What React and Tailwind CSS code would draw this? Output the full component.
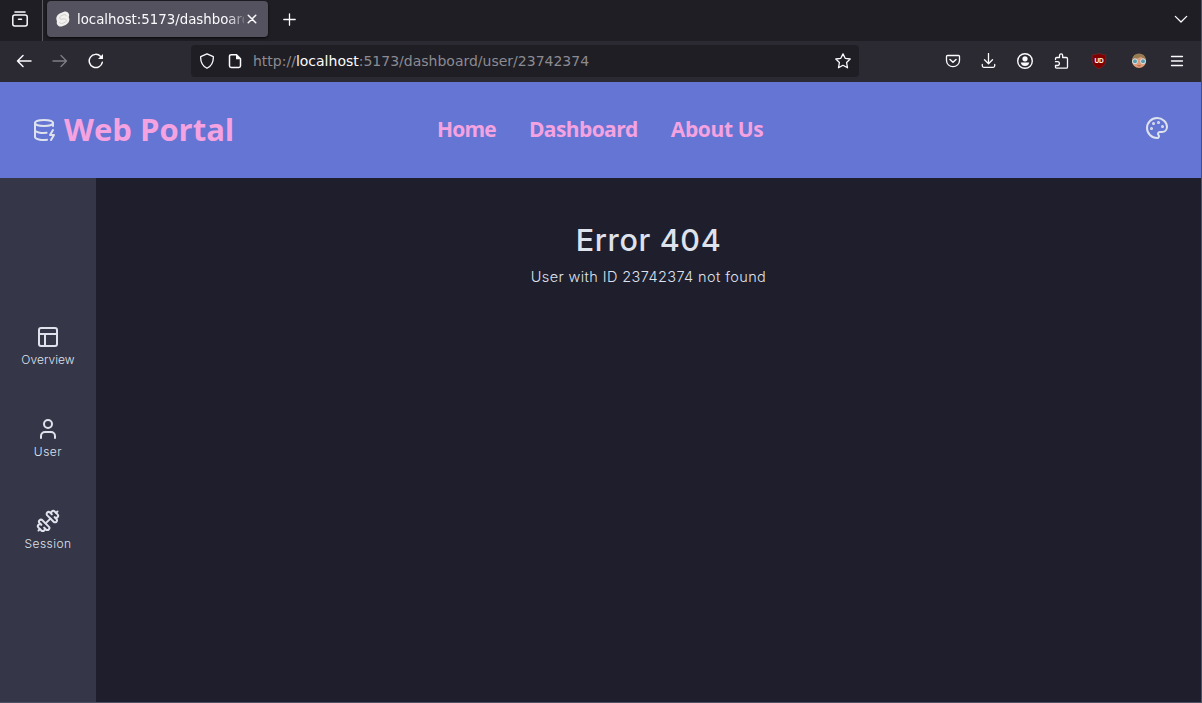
import React from "react";
import { DatabaseZap, Palette, PanelsTopLeft, User, Dumbbell } from "lucide-react";

function Svg({ size = 16, className = "", children }) {
  return (
    <svg
      width={size}
      height={size}
      viewBox="0 0 16 16"
      fill="none"
      stroke="currentColor"
      strokeWidth="1.3"
      strokeLinecap="round"
      strokeLinejoin="round"
      className={"shrink-0 " + className}
    >
      {children}
    </svg>
  );
}

function TabBar() {
  return (
    <div className="flex h-[41px] items-start bg-[#1f1e24] text-[#fbfbfe]">
      <div className="flex h-[41px] w-[43px] items-center border-r border-[#5b5a63] pl-3 pb-[3px]">
        <Svg>
          <path d="M3 1H13" strokeWidth="1.5" />
          <rect x="0.8" y="4" width="14.4" height="11" rx="2" strokeWidth="1.5" />
          <path d="M6.500 8.200H9.500" strokeWidth="1.5" />
        </Svg>
      </div>
      <div className="ml-1 mt-px flex h-9 w-[221px] items-center rounded bg-[#53525e] pl-2 shadow-sm shadow-black/60">
        <svg width="16" height="16" viewBox="0 0 16 16" className="shrink-0">
          <path d="M5.200 2.200 9 .7C11-.1 13.200.9 13.900 2.900 14.300 4 14.200 5 13.700 6 14.500 7.500 14.500 9 13.900 10.600 13.200 12.300 12 13.200 10.600 13.900L7.300 15.300C5.200 16.100 3 15.200 2.100 13.300 1.600 12.200 1.600 11.200 2 10.200 1.300 9 1.100 7.500 1.600 6 2.200 4 3.500 3 5.200 2.200Z" fill="#f1f0ee" />
          <path d="M11.500 5.200C11 3.600 9.600 3.200 8.300 3.800L5.700 5.100C4 6 4.300 8.100 6 8.200L9.400 7.900C11.600 7.900 12 10.200 10.300 11.100L7.500 12.400C6.100 13 4.700 12.400 4.400 11" fill="none" stroke="#cfcecc" strokeWidth="1" />
        </svg>
        <div className="ml-[5px] mt-px w-[168px] overflow-hidden whitespace-nowrap pl-px font-['DejaVu_Sans',sans-serif] text-[13.33px] leading-5 [mask-image:linear-gradient(to_right,black_152px,transparent_172px)]">
          localhost:5173/dashboard
        </div>
        <Svg size={10} className="ml-[3px]">
          <path d="M2 2 14 14M14 2 2 14" strokeWidth="2.400" />
        </Svg>
      </div>
      <div className="ml-[15px] mt-[13px]">
        <Svg size={13}>
          <path d="M8 1V15M1 8H15" strokeWidth="1.600" />
        </Svg>
      </div>
      <div className="ml-auto mr-[13px] mt-[12px]">
        <Svg size={14}>
          <path d="M1.500 5 8 11.500 14.500 5" strokeWidth="1.500" />
        </Svg>
      </div>
    </div>
  );
}

function ToolBar() {
  return (
    <div className="flex h-[41px] items-center bg-[#2b2a33] pb-[2px] pl-4 pr-4 text-[#fbfbfe]">
      <Svg>
        <path d="M15 8H1.500M7 2.500 1.500 8 7 13.500" strokeWidth="1.500" />
      </Svg>
      <Svg className="ml-5 text-[#7f7e86]">
        <path d="M1 8H14.500M9 2.500 14.500 8 9 13.500" />
      </Svg>
      <Svg className="ml-5">
        <path d="M14.300 9.300A6.600 6.600 0 1 1 12.700 3.500" strokeWidth="1.500" />
        <path d="M15 1V6H10Z" fill="currentColor" stroke="none" />
      </Svg>
      <div className="ml-[87px] flex h-8 w-[668px] items-center rounded bg-[#1f1e24] pl-2 pr-2">
        <Svg>
          <path d="M8 .8 14.300 3.600C14.600 8.500 13 12.600 8 15.300 3 12.600 1.400 8.500 1.700 3.600Z" />
        </Svg>
        <Svg className="ml-3">
          <path d="M4.200 1.700H9.500L13.500 5.700V12.800Q13.500 14.500 11.800 14.500H4.200Q2.500 14.500 2.500 12.800V3.400Q2.500 1.700 4.200 1.700Z" strokeWidth="1.500" />
          <path d="M9 1.200V6.200H14Z" fill="currentColor" stroke="none" />
        </Svg>
        <div className="ml-[10px] whitespace-nowrap font-['DejaVu_Sans',sans-serif] text-[14px] leading-5 text-[#8c8b92]">
          http://<span className="text-[#fbfbfe]">localhost</span>:5173/dashboard/user/23742374
        </div>
        <Svg className="ml-auto">
          <path d="M8 .9 10.200 5.300 15.200 6 11.600 9.500 12.500 14.800 8 12.300 3.500 14.800 4.400 9.500 .8 6 5.800 5.300Z" />
        </Svg>
      </div>
      <div className="ml-auto flex items-center">
        <Svg>
          <path d="M2.500 2.500H13.500Q14.500 2.500 14.500 3.500V7.500A6.500 6.200 0 0 1 1.500 7.500V3.500Q1.500 2.500 2.500 2.500Z" />
          <path d="M5 6.500 8 9.300 11 6.500" strokeWidth="1.500" />
        </Svg>
        <Svg className="ml-5">
          <path d="M7.500 .5V10.500M3.500 6.800 7.500 10.700 11.500 6.800M1.300 11.500V12.800Q1.300 14.300 2.800 14.300H12.200Q13.700 14.300 13.700 12.800V11.500" />
        </Svg>
        <Svg className="ml-5">
          <circle cx="8" cy="8" r="7.300" strokeWidth="1.400" />
          <circle cx="8" cy="5.800" r="2.600" fill="currentColor" stroke="none" />
          <path d="M3.700 9.400H12.300Q11.500 12.900 8 12.900T3.700 9.400Z" fill="currentColor" stroke="none" />
        </Svg>
        <Svg className="ml-[21px]">
          <path d="M1.500 6.500V5.700Q1.500 4.500 2.700 4.500H5.500V2.700A1.600 1.800 0 0 1 8.700 2.700V4.500H12.300Q13.500 4.500 13.500 5.700V14Q13.500 15.200 12.300 15.200H2.700Q1.500 15.200 1.500 14V12.500H3.500A1.900 1.900 0 0 0 3.500 8.700H1.500" />
        </Svg>
        <div className="relative ml-[21px] h-4 w-4">
          <svg width="16" height="16" viewBox="0 0 16 16">
            <path d="M8 .3Q11 1.800 14.800 1.800V7.500Q14.500 13 8 15.800 1.500 13 1.200 7.500V1.800Q5 1.800 8 .3Z" fill="#800000" stroke="#6b3238" strokeWidth=".6" />
          </svg>
          <span className="absolute inset-x-0 top-[3px] text-center font-['Liberation_Sans',sans-serif] text-[6.5px] font-bold leading-[9px] tracking-[-0.3px] text-white">
            UD
          </span>
        </div>
        <svg width="16" height="16" viewBox="0 0 16 16" className="ml-6">
          <circle cx="8" cy="8" r="7" fill="#e09a76" />
          <path d="M1.200 6.500Q2 .5 8 .5T14.800 6.500L12 5.500 10 3.800Q7 5.800 1.200 6.500Z" fill="#967a52" />
          <circle cx="4" cy="8.300" r="2.500" fill="#5b9aac" stroke="#dbe5e8" strokeWidth="1" />
          <circle cx="12" cy="8.300" r="2.500" fill="#5b9aac" stroke="#dbe5e8" strokeWidth="1" />
          <path d="M6.500 12.500Q8 13.300 9.500 12.500" stroke="#a85e4a" fill="none" />
        </svg>
        <Svg className="ml-[22px]">
          <path d="M2.500 3.500H13.500M2.500 8H13.500M2.500 12.500H13.500" />
        </Svg>
      </div>
    </div>
  );
}

function Header() {
  return (
    <header className="flex h-24 items-center bg-[#6575d3] px-8 pb-[2px] font-['Open_Sans','Noto_Sans',sans-serif] font-bold text-[#f5a3e0]">
      <div className="flex w-[405px] items-center">
        <DatabaseZap size={24} className="mt-px text-[#dee2ec]" />
        <span className="ml-2 whitespace-nowrap text-[31px] leading-9">Web Portal</span>
      </div>
      <nav className="flex gap-[33px] whitespace-nowrap text-[21px] leading-7">
        <span className="tracking-[-0.8px]">Home</span>
        <span className="tracking-[-0.6px]">Dashboard</span>
        <span className="tracking-[-0.35px]">About Us</span>
      </nav>
      <Palette size={24} className="mb-[2px] ml-auto text-[#dee2ec]" />
    </header>
  );
}

const links = [
  { label: "Overview", Icon: PanelsTopLeft, tracking: "tracking-[0.05px]" },
  { label: "User", Icon: User, tracking: "tracking-[0.5px]" },
  { label: "Session", Icon: Dumbbell, tracking: "tracking-[0.45px]" },
];

export default function App() {
  return (
    <div className="flex h-[703px] w-[1202px] flex-col overflow-hidden border-b border-r border-[#4c5264] bg-[#1f1e2d]">
      <TabBar />
      <ToolBar />
      <Header />
      <div className="flex min-h-0 flex-1 font-['Inter',sans-serif] text-[#dee2ec]">
        <aside className="flex w-24 flex-col items-center gap-[49px] bg-[#353648] pt-[147px]">
          {links.map(({ label, Icon, tracking }) => (
            <div key={label} className="flex flex-col items-center gap-[3px]">
              <Icon size={24} />
              <span className={"text-[12px] font-light leading-4 " + tracking}>{label}</span>
            </div>
          ))}
        </aside>
        <main className="flex flex-1 flex-col items-center pt-11">
          <h1 className="text-[30.5px] font-medium leading-9 tracking-[0.65px]">Error 404</h1>
          <p className="mt-[7px] text-[14.5px] font-light leading-6 tracking-[0.4px]">User with ID 23742374 not found</p>
        </main>
      </div>
    </div>
  );
}
